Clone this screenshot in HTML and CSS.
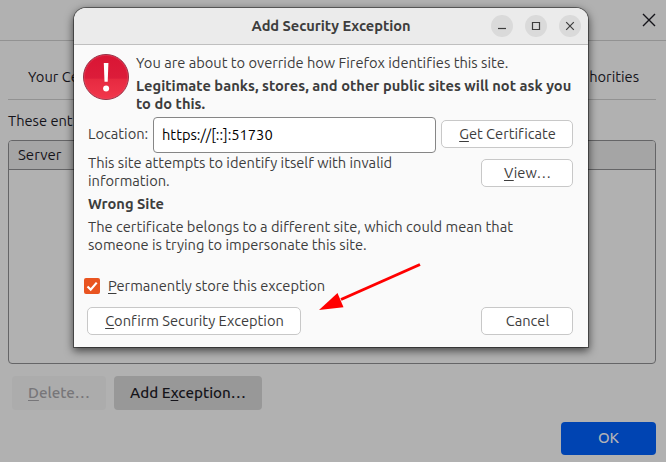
FILE: index.html
```html
<!DOCTYPE html>
<html lang="en">
<head>
<meta charset="utf-8">
<title>Add Security Exception</title>
<link rel="stylesheet" href="styles.css">
</head>
<body>
<main class="manager">
  <header class="manager-head">
    <svg class="close" width="14" height="14" viewBox="0 0 14 14"><path d="M1 1l12 12M13 1L1 13"/></svg>
  </header>
  <nav class="tabs">
    <span>Your Ce</span>
    <span>horities</span>
  </nav>
  <p class="intro">These ent</p>
  <section class="table"><div class="table-head">Server</div></section>
  <div class="actions">
    <button class="action disabled"><u>D</u>elete…</button>
    <button class="action add">Add E<u>x</u>ception…</button>
  </div>
  <footer class="manager-foot"><button class="ok">OK</button></footer>
</main>

<div class="dialog">
  <header class="titlebar">
    <h1>Add Security Exception</h1>
    <div class="controls">
      <span><svg width="22" height="22" viewBox="0 0 22 22"><path d="M7 13.5h8"/></svg></span>
      <span><svg width="22" height="22" viewBox="0 0 22 22"><path d="M7.5 7.5h7v7h-7z"/></svg></span>
      <span><svg width="22" height="22" viewBox="0 0 22 22"><path d="M7.2 7.2l7.6 7.6M14.8 7.2l-7.6 7.6"/></svg></span>
    </div>
  </header>
  <div class="content">
    <div class="warning">
      <svg class="alert" width="48" height="48" viewBox="0 0 48 48">
        <defs><linearGradient id="red" x1="0" y1="0" x2="0" y2="1"><stop offset="0" stop-color="#d91534"/><stop offset=".53" stop-color="#dc1c3a"/><stop offset=".54" stop-color="#e62940"/><stop offset="1" stop-color="#f2374c"/></linearGradient></defs>
        <circle cx="24" cy="24" r="22.5" fill="url(#red)" stroke="#943347"/>
        <circle cx="24" cy="24" r="21.6" fill="none" stroke="#ef5068" stroke-opacity=".6" stroke-width=".7"/>
        <path d="M21.8 10h4.6l-.7 18.8h-3.2z" fill="#fff"/><circle cx="24.1" cy="35.4" r="3" fill="#fff"/>
      </svg>
      <div class="warning-text">
        <p>You are about to override how Firefox identifies this site.</p>
        <p class="strong">Legitimate banks, stores, and other public sites will not ask you<br>to do this.</p>
      </div>
    </div>
    <div class="location">
      <label for="url">Location:</label>
      <input id="url" type="text" value="https://[::]:51730">
      <button class="push get"><u>G</u>et Certificate</button>
    </div>
    <div class="status">
      <p>This site attempts to identify itself with invalid<br>information.</p>
      <button class="push view"><u>V</u>iew…</button>
    </div>
    <h2>Wrong Site</h2>
    <p class="detail">The certificate belongs to a different site, which could mean that<br>someone is trying to impersonate this site.</p>
    <div class="store">
      <span class="check"><svg width="16" height="16" viewBox="0 0 16 16"><path d="M3.5 8.5l3.2 3.1 6-7"/></svg></span>
      <span><u>P</u>ermanently store this exception</span>
    </div>
    <div class="buttons">
      <button class="push confirm"><u>C</u>onfirm Security Exception</button>
      <button class="push cancel">Cancel</button>
    </div>
  </div>
</div>
<svg class="arrow" width="106" height="50" viewBox="0 0 106 50"><path d="M105 2.5L26 37.5" stroke="#f00" stroke-width="3"/><path d="M4 48L22.5 31l6 14.3z" fill="#f00"/></svg>
</body>
</html>
```
FILE: styles.css
```css
* { box-sizing: border-box; }
body {
  margin: 0;
  height: 462px;
  overflow: hidden;
  background: #b1b1b1;
  color: #15141a;
  font: 14.667px/18px Ubuntu, "Noto Sans", sans-serif;
  font-variant-ligatures: none;
}
p, h1, h2 { margin: 0; font-size: 14.667px; line-height: 18px; white-space: nowrap; }
button, input { font: inherit; font-variant-ligatures: none; white-space: nowrap; }
u { text-decoration-thickness: 1px; text-underline-offset: 2px; text-decoration-skip-ink: none; }

.manager { display: flex; flex-direction: column; height: 462px; }
.manager-head {
  display: flex;
  justify-content: flex-end;
  height: 41px;
  padding: 13px 10px 0 0;
  border-bottom: 1px solid #929292;
}
.close { stroke: #15141a; stroke-width: 1.4; fill: none; }
.tabs {
  display: flex;
  justify-content: space-between;
  height: 59px;
  margin: 0 10px 0 8px;
  padding: 27px 17px 0 20px;
  border-bottom: 1px solid #929292;
}
.intro { margin: 12px 0 0 8px; }
.table {
  height: 224px;
  margin: 10px 10px 0 8px;
  border: 1px solid #656567;
  border-radius: 4px;
}
.table-head {
  height: 29px;
  padding: 5px 9px;
  border-bottom: 1px solid #656567;
  border-radius: 3px 3px 0 0;
  background: #a5a5a5;
  font-size: 15px;
}
.actions { display: flex; gap: 8px; margin: 12px 0 0 12px; }
.action {
  height: 34px;
  padding: 0;
  border: 0;
  border-radius: 4px;
  background: #989898;
  color: #15141a;
  font-size: 15.2px;
  font-weight: 500;
}
.action.disabled { width: 94px; background: #acacac; color: #777679; }
.action.add { width: 148px; }
.manager-foot { display: flex; justify-content: flex-end; margin: 12px 10px 0 0; }
.ok {
  width: 95px;
  height: 33px;
  padding: 0 0 2px;
  border: 0;
  border-radius: 4px;
  background: #0044b2;
  color: #b1b1b6;
  font-size: 15px;
  font-weight: 500;
}

.dialog {
  position: absolute;
  left: 74px;
  top: 8px;
  width: 514px;
  height: 339px;
  border-radius: 12px 12px 0 0;
  background: #fafafa;
  color: #3d3d3d;
  box-shadow: 0 0 0 1px rgba(0,0,0,.42), 0 3px 9px 1px rgba(0,0,0,.6);
}
.titlebar {
  display: grid;
  grid-template-columns: 1fr;
  height: 37px;
  border-bottom: 1px solid #bfbfbf;
  border-radius: 12px 12px 0 0;
  background: #ebebeb;
}
.titlebar > * { grid-area: 1 / 1; }
.titlebar h1 { align-self: center; text-align: center; letter-spacing: -.05px; }
.controls { display: flex; justify-content: flex-end; align-items: center; gap: 12px; padding-right: 7px; }
.controls span { width: 22px; height: 22px; border-radius: 50%; background: #dadada; }
.controls svg { display: block; fill: none; stroke: #3d3d3d; stroke-width: 1.2; }

.content { padding: 9px 15px 0 14px; }
.warning { display: flex; height: 63px; }
.alert { flex: none; margin: -1px 0 0 -6px; }
.warning-text { margin-left: 6px; }
.strong { margin-top: 5px; font-weight: 700; letter-spacing: .015px; }
.location { display: flex; height: 36px; align-items: center; }
.location label { width: 65px; padding-bottom: 2px; }
.location input {
  width: 283px;
  height: 36px;
  margin-right: 5px;
  padding: 0 8px 2px;
  border: 1px solid #868686;
  border-radius: 4px;
  background: #fff;
  color: #000;
}
.push {
  height: 28px;
  padding: 0 0 0 1px;
  border: 1px solid #c8c8c8;
  border-radius: 5px;
  background: #fff;
  color: #3d3d3d;
}
.get { width: 132px; margin-bottom: 2px; }
.status { display: flex; justify-content: space-between; height: 41px; padding-top: 1px; }
.view { width: 92px; margin-top: 5px; }
h2 { margin-top: 1px; }
.detail { margin-top: 5px; }
.store { display: flex; align-items: center; gap: 8px; height: 18px; margin: 23px 0 0 -4px; }
.check { width: 16px; height: 16px; border-radius: 2px; background: #e95420; }
.check svg { display: block; fill: none; stroke: #fff; stroke-width: 2.2; }
.buttons { display: flex; justify-content: space-between; margin: 12px 0 0 -1px; }
.confirm { width: 214px; }
.cancel { width: 92px; }
.arrow { position: absolute; left: 315px; top: 262px; }
```
